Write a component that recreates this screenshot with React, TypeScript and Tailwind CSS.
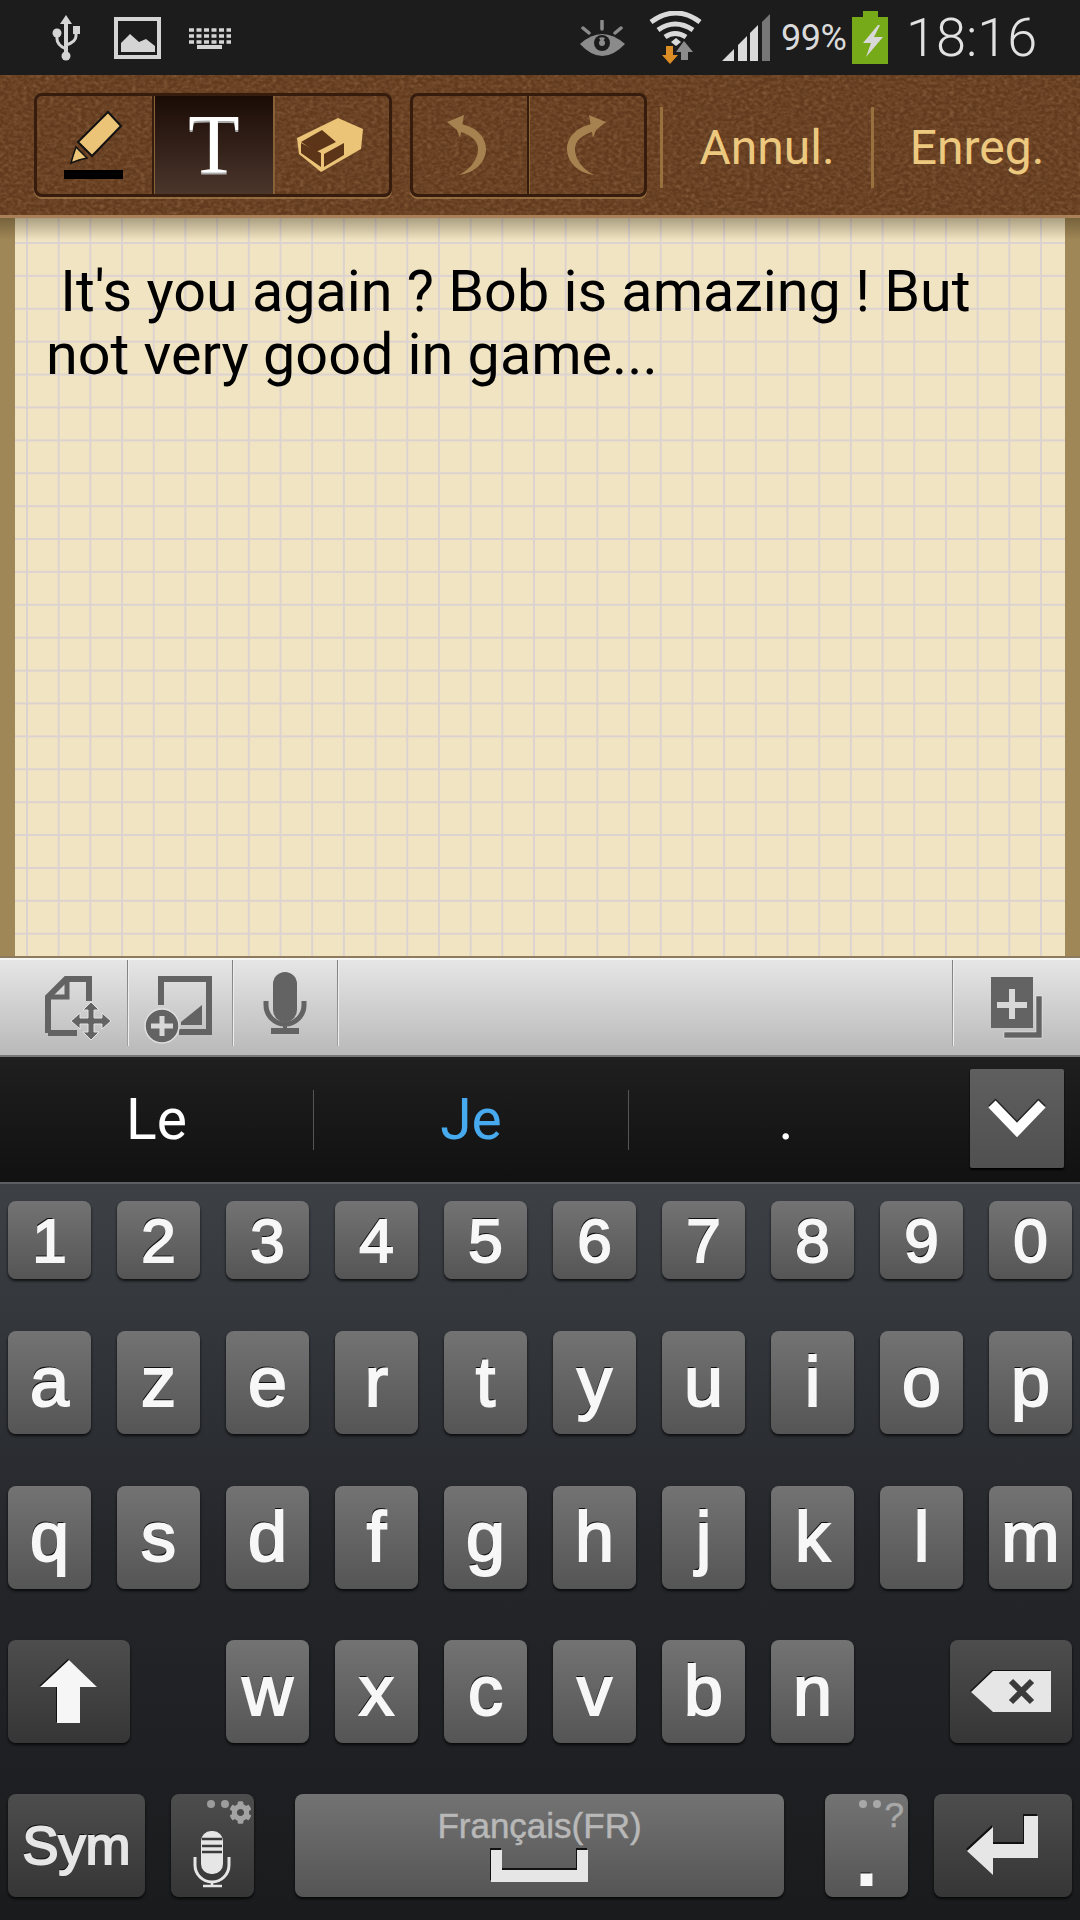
import { FaCog } from "react-icons/fa";

const digits = ["1", "2", "3", "4", "5", "6", "7", "8", "9", "0"];
const topLetters = ["a", "z", "e", "r", "t", "y", "u", "i", "o", "p"];
const midLetters = ["q", "s", "d", "f", "g", "h", "j", "k", "l", "m"];
const lowLetters = ["w", "x", "c", "v", "b", "n"];

const lightKey = "bg-gradient-to-b from-[#737373] to-[#555555] shadow-[0_2px_3px_rgba(0,0,0,0.75)]";
const darkKey = "bg-gradient-to-b from-[#4d4d4d] to-[#363636] shadow-[0_2px_3px_rgba(0,0,0,0.75)]";
const keyFace = "font-['Liberation_Sans'] text-[#f7f7f7] [text-shadow:-1px_-2px_0_#111] [-webkit-text-stroke:2px_#f7f7f7]";

function LetterKey({ label, small }: { label: string; small?: boolean }) {
  return (
    <div className={`w-[83px] h-full rounded-lg flex items-center justify-center ${lightKey} ${keyFace} ${small ? "text-[62px]" : "text-[70px]"}`}>
      {label}
    </div>
  );
}

function StatusBar() {
  return (
    <div className="h-[75px] bg-[#1c1c1c] flex items-center shrink-0">
      {/* usb */}
      <svg className="ml-[52px]" width="29" height="46" viewBox="52 14 29 46">
        <path d="M66 14l6 9h-4v28h-4V23h-4z" fill="#d4d4d4" />
        <circle cx="66" cy="55" r="4.5" fill="#d4d4d4" />
        <circle cx="57" cy="32" r="4.5" fill="#d4d4d4" />
        <rect x="73" y="25" width="7" height="8" fill="#d4d4d4" />
        <path d="M57 34v4q0 6 9 10M76 32v3q0 6-10 9" fill="none" stroke="#d4d4d4" strokeWidth="3" />
      </svg>
      {/* gallery */}
      <svg className="ml-[33px]" width="47" height="42" viewBox="114 16 47 42">
        <rect x="116" y="18" width="43" height="38" fill="none" stroke="#d4d4d4" strokeWidth="4" />
        <path d="M121 51V42l9-9 9 8 7-3 9 7v6z" fill="#d4d4d4" />
      </svg>
      {/* keyboard */}
      <svg className="ml-[27px]" width="43" height="22" viewBox="188 27 43 22">
        <path d="M189 30h42M189 36h42M189 42h42" stroke="#d4d4d4" strokeWidth="3.5" strokeDasharray="5 2.5" fill="none" />
        <rect x="197" y="45" width="25" height="4" fill="#d4d4d4" />
      </svg>

      {/* eye */}
      <svg className="ml-[349px]" width="45" height="36" viewBox="580 19 45 36">
        <path d="M580 43q22-20 45 0q-23 24-45 0z" fill="#8b8b8b" />
        <circle cx="602" cy="42" r="8" fill="#1c1c1c" />
        <path d="M602 42l-3-5a6 6 0 0 1 6 0z" fill="#8b8b8b" />
        <circle cx="602" cy="42" r="3" fill="#8b8b8b" />
        <path d="M602 20v8M583 27l6 5M621 27l-6 5" stroke="#8b8b8b" strokeWidth="3.5" strokeLinecap="round" />
      </svg>
      {/* wifi with traffic arrows */}
      <svg className="ml-[24px]" width="53" height="54" viewBox="649 10 53 54">
        <path d="M651 21q25-18 49 0" fill="none" stroke="#dadada" strokeWidth="5" />
        <path d="M658 29q17-12 35 0" fill="none" stroke="#dadada" strokeWidth="5" />
        <path d="M665 36q10-7 21 0" fill="none" stroke="#dadada" strokeWidth="5" />
        <path d="M671 41l5-4 5 4-5 4z" fill="#dadada" />
        <path d="M666 45h7v9h5l-8 9-8-9h4z" fill="#dd8d25" />
        <path d="M684 40l9 11h-5v8h-7v-8h-5z" fill="#8c8c8c" />
      </svg>
      {/* signal */}
      <svg className="ml-[20px]" width="48" height="47" viewBox="722 16 48 47">
        <path d="M722 63l12-12v12zM738 63V47l9-9v25zM750 63V35l8-8v36z" fill="#dadada" />
        <path d="M762 63V24l8-8v47z" fill="#777777" />
      </svg>
      <span className="ml-[11px] w-[64px] text-[36px] leading-none font-[Roboto] text-[#dadada] whitespace-nowrap tracking-[-0.5px]">99%</span>
      {/* battery */}
      <svg className="ml-[7px]" width="36" height="53" viewBox="852 11 36 53">
        <path d="M863 11h15v6h10v47h-36V17h11z" fill="#77aa18" />
        <path d="M878 25l-15 18h8l-5 14 17-20h-9l6-12z" fill="#d8d8d8" />
      </svg>
      <span className="ml-[18px] text-[54px] leading-none font-[Roboto] font-light text-[#e2e2e2]">18:16</span>
    </div>
  );
}

function ToolCell({ width, children, active }: { width: string; children: React.ReactNode; active?: boolean }) {
  return (
    <div className={`${width} h-full flex items-center justify-center ${active ? "bg-gradient-to-b from-[#1b0c07] to-[#4b362c]" : ""}`}>
      {children}
    </div>
  );
}

function UndoArrow({ flip }: { flip?: boolean }) {
  return (
    <svg className={flip ? "-scale-x-100" : ""} width="42" height="62" viewBox="0 0 42 62">
      <path d="M2 8L19 1l-4 23-3-8z" fill="#a5824f" />
      <path d="M12 9C30 12 41 22 41 35C41 48 30 59 14 61C26 55 33 45 33 35C33 27 26 20 12 17z" fill="#a5824f" />
    </svg>
  );
}

function Toolbar() {
  const groupFrame = "h-[104px] flex border-[3px] border-[#361c0d] rounded-[8px] shadow-[0_2px_0_rgba(176,136,84,0.6)] overflow-hidden";
  const divider = "w-[3px] h-full bg-[#361c0d] border-r border-[#8a6238]";
  return (
    <div className="relative h-[143px] shrink-0 bg-[#623a1e] border-b-[3px] border-[#a98057] flex items-start pt-[18px]">
      {/* leather grain */}
      <svg className="absolute inset-0 w-full h-full opacity-35">
        <filter id="hide">
          <feTurbulence type="fractalNoise" baseFrequency="0.22 0.3" numOctaves="2" seed="7" />
          <feColorMatrix values="0 0 0 0 0.55  0 0 0 0 0.33  0 0 0 0 0.15  1.4 1 0 0 -0.95" />
        </filter>
        <rect width="100%" height="100%" filter="url(#hide)" />
      </svg>

      <div className={`relative ml-[34px] w-[358px] ${groupFrame}`}>
        <ToolCell width="w-[115px]">
          {/* highlighter with current colour bar */}
          <svg className="mr-[2px]" width="66" height="74" viewBox="60 106 66 74">
            <path d="M107 110l13 14-29 30-14-14z" fill="#ecc478" stroke="#111" strokeWidth="2" />
            <path d="M75 145l11 11-8 2-8 3 2-7z" fill="#ecc478" stroke="#111" strokeWidth="1.5" />
            <rect x="63" y="168" width="59" height="9" fill="#000" />
          </svg>
        </ToolCell>
        <div className={divider} />
        <ToolCell width="w-[118px]" active>
          <span className="font-['Liberation_Serif'] text-[84px] leading-none text-white [text-shadow:0_2px_0_#aaa]">T</span>
        </ToolCell>
        <div className="w-[2px] h-full bg-[#8a6238]" />
        <ToolCell width="flex-1">
          {/* eraser */}
          <svg className="mr-[5px]" width="68" height="56" viewBox="295 116 68 56">
            <path d="M296 137l41-20 25 11-2 20-40 23-22-18z" fill="#ecc478" />
            <path d="M321 129l14 12-20 10-15-10z" fill="#5c3519" />
            <path d="M300 142l20 10v14l-20-14zM323 153l20-11v12l-20 12z" fill="#5c3519" />
          </svg>
        </ToolCell>
      </div>

      <div className={`relative ml-[18px] w-[237px] ${groupFrame}`}>
        <ToolCell width="w-[114px]">
          <UndoArrow />
          <div className="w-[8px]" />
        </ToolCell>
        <div className={divider} />
        <ToolCell width="flex-1">
          <UndoArrow flip />
        </ToolCell>
      </div>

      <div className="relative ml-[13px] mt-[14px] w-[3px] h-[81px] bg-[#99713f]" />
      <div className="relative w-[208px] h-[109px] flex items-center justify-center font-[Roboto] text-[48px] text-[#ecc97f]">Annul.</div>
      <div className="relative mt-[14px] w-[3px] h-[81px] bg-[#99713f]" />
      <div className="relative flex-1 h-[109px] flex items-center justify-center font-[Roboto] text-[48px] text-[#ecc97f]">Enreg.</div>
    </div>
  );
}

function Paper() {
  return (
    <div className="relative flex-1 flex border-b-2 border-[#8c7c5c]">
      <div className="w-[15px] bg-[#a08757]" />
      <div className="flex-1 bg-[#f1e4c2] bg-[linear-gradient(to_right,#dcd3d0_1.5px,transparent_1.5px),linear-gradient(to_bottom,#dcd3d0_1.5px,transparent_1.5px)] bg-size-[31.7px_32.9px] bg-position-[11px_24px]">
        <p className="pl-[31px] pr-[30px] pt-[42px] font-[Roboto] text-[57.5px] leading-[63px] text-black whitespace-pre-wrap">
          {" It's you again ? Bob is amazing ! But not very good in game..."}
        </p>
      </div>
      <div className="w-[15px] bg-[#a08757]" />
      <div className="absolute inset-x-0 top-0 h-[22px] bg-gradient-to-b from-[rgba(40,30,10,0.35)] to-transparent" />
    </div>
  );
}

function StripDivider() {
  return <div className="w-[2px] h-[86px] self-start bg-gradient-to-b from-[#7f7f7f] to-[#a0a0a0] border-r border-[#eeeeee]" />;
}

function EditStrip() {
  return (
    <div className="h-[99px] shrink-0 flex bg-gradient-to-b from-[#e6e6e6] to-[#b9b9b9] border-t-2 border-[#f6f6f6] border-b-2 border-b-[#777777]">
      {/* move page */}
      <svg width="127" height="96" viewBox="0 960 127 96">
        <path d="M48 1033V997l18-18h23v22M48 1033h29" fill="none" stroke="#636363" strokeWidth="6" />
        <path d="M48 997h19v-18" fill="none" stroke="#636363" strokeWidth="5" />
        <path d="M91 1002l8 8h-5v8h8v-5l9 8-9 8v-5h-8v8h5l-8 8-8-8h5v-8h-8v5l-9-8 9-8v5h8v-8h-5z" fill="#636363" stroke="#e4e4e4" strokeWidth="1" />
      </svg>
      <StripDivider />
      {/* add image */}
      <svg width="103" height="96" viewBox="129 960 103 96">
        <path d="M161 1005v-26h48v53h-30" fill="none" stroke="#636363" strokeWidth="6" />
        <path d="M181 1022l21-17v20h-21z" fill="#636363" />
        <circle cx="162" cy="1026" r="17" fill="#636363" stroke="#e0e0e0" strokeWidth="1.5" />
        <path d="M162 1016v20M151 1026h22" stroke="#d8d8d8" strokeWidth="5" />
      </svg>
      <StripDivider />
      {/* voice */}
      <svg width="103" height="96" viewBox="234 960 103 96">
        <rect x="273" y="972" width="24" height="50" rx="12" fill="#636363" />
        <path d="M266 1001v4a19 19 0 0 0 38 0v-4" fill="none" stroke="#636363" strokeWidth="5" />
        <path d="M285 1024v6" stroke="#636363" strokeWidth="4" />
        <rect x="271" y="1028" width="28" height="6" fill="#636363" />
      </svg>
      <StripDivider />
      <div className="flex-1" />
      <StripDivider />
      {/* add page */}
      <svg width="126" height="96" viewBox="954 960 126 96">
        <path d="M1036 996h6v42h-38v-6h32z" fill="#636363" stroke="#f0f0f0" strokeWidth="0.5" />
        <rect x="991" y="977" width="42" height="51" fill="#636363" />
        <path d="M1012 989v30M997 1005h30" stroke="#d8d8d8" strokeWidth="6" />
      </svg>
    </div>
  );
}

function Suggestions() {
  return (
    <div className="h-[125px] shrink-0 flex items-center bg-gradient-to-b from-[#1f1f1f] to-[#111111] font-[Roboto] text-[57px]">
      <div className="w-[313px] text-center text-white">Le</div>
      <div className="w-px h-[60px] bg-[#555555]" />
      <div className="w-[314px] text-center text-[#47a9ee]">Je</div>
      <div className="w-px h-[60px] bg-[#555555]" />
      <div className="w-[314px] text-center text-white">.</div>
      <div className="ml-[27px] w-[94px] h-[99px] mt-[-2px] rounded-[2px] bg-gradient-to-b from-[#5f5f5f] to-[#505050] shadow-[0_2px_2px_#000] flex items-center justify-center">
        <svg className="mb-[6px]" width="62" height="42" viewBox="-1 -1 62 42">
          <path d="M5 8l25 26 25-26" fill="none" stroke="#ffffff" strokeWidth="10" className="drop-shadow-[0_-2px_0_#222]" />
        </svg>
      </div>
    </div>
  );
}

function Keyboard() {
  const darkLabel = "font-['Liberation_Sans'] text-[#e6e6e6] [text-shadow:-1px_-2px_0_#111] [-webkit-text-stroke:2px_#e6e6e6]";
  return (
    <div className="h-[738px] shrink-0 flex flex-col px-2 pt-[17px] bg-gradient-to-b from-[#3d4146] via-[#24262a] to-[#1a1b1d] border-t-2 border-[#5b5f64]">
      <div className="h-[78px] flex justify-between">
        {digits.map((d) => (
          <LetterKey key={d} label={d} small />
        ))}
      </div>
      <div className="h-[103px] mt-[52px] flex justify-between">
        {topLetters.map((l) => (
          <LetterKey key={l} label={l} />
        ))}
      </div>
      <div className="h-[103px] mt-[52px] flex justify-between">
        {midLetters.map((l) => (
          <LetterKey key={l} label={l} />
        ))}
      </div>
      <div className="h-[103px] mt-[51px] flex">
        <div className={`w-[122px] h-full rounded-lg flex items-center justify-center ${darkKey}`}>
          <svg width="58" height="64" viewBox="41 1656 58 64" className="drop-shadow-[-1px_-1px_0_#111]">
            <path d="M70 1656l28 27H81v36H58v-36H41z" fill="#f6f6f6" />
          </svg>
        </div>
        <div className="ml-[96px] flex gap-[26px] h-full">
          {lowLetters.map((l) => (
            <LetterKey key={l} label={l} />
          ))}
        </div>
        <div className={`ml-[96px] w-[122px] h-full rounded-lg flex items-center justify-center ${darkKey}`}>
          <svg width="82" height="44" viewBox="971 1666 82 44" className="drop-shadow-[-1px_-1px_0_#111]">
            <path d="M994 1667h58v41h-58l-22-20z" fill="#e6e6e6" />
            <path d="M1012 1677l21 21M1033 1677l-21 21" stroke="#3a3a3a" strokeWidth="6" />
          </svg>
        </div>
      </div>
      <div className="h-[103px] mt-[51px] flex">
        <div className={`w-[137px] h-full rounded-lg flex items-center justify-center text-[54px] ${darkKey} ${darkLabel}`}>Sym</div>
        <div className={`relative ml-[26px] w-[83px] h-full rounded-lg ${darkKey}`}>
          <svg className="absolute left-0 top-0" width="83" height="103" viewBox="171 1793 83 103">
            <circle cx="211" cy="1803" r="4" fill="#9c9c9c" />
            <circle cx="225" cy="1803" r="4" fill="#9c9c9c" />
            <rect x="201" y="1830" width="22" height="43" rx="10" fill="#e6e6e6" />
            <path d="M202 1838h20M202 1845h20M202 1851h20" stroke="#3a3a3a" strokeWidth="2.5" />
            <path d="M195 1856v8a17 17 0 0 0 34 0v-8" fill="none" stroke="#e6e6e6" strokeWidth="3" />
            <path d="M212 1881v4M203 1885h19" stroke="#e6e6e6" strokeWidth="2.5" />
          </svg>
          <FaCog className="absolute right-[2px] top-[7px] text-[#a3a3a3]" size={23} />
        </div>
        <div className={`relative ml-[41px] w-[489px] h-full rounded-lg ${lightKey}`}>
          <div className="text-center pt-[12px] font-['Liberation_Sans'] text-[35px] leading-[40px] text-[#b8b8b8] [-webkit-text-stroke:0.5px_#b8b8b8]">Français(FR)</div>
          <svg className="absolute left-[196px] top-[56px] drop-shadow-[-1px_-2px_0_#111]" width="97" height="32" viewBox="0 0 97 32">
            <path d="M0 0h11v20h75V0h11v32H0z" fill="#e6e6e6" />
          </svg>
        </div>
        <div className={`relative ml-[41px] w-[83px] h-full rounded-lg flex items-center justify-center ${lightKey}`}>
          <span className={`mt-[30px] text-[70px] leading-none font-bold ${keyFace}`}>.</span>
          <span className="absolute right-[4px] top-[1px] font-['Liberation_Sans'] text-[35px] leading-[40px] text-[#a8a8a8] [-webkit-text-stroke:0.5px_#a8a8a8]">?</span>
          <svg className="absolute left-[34px] top-[6px]" width="24" height="8" viewBox="0 0 24 8">
            <circle cx="4" cy="4" r="4" fill="#a8a8a8" />
            <circle cx="18" cy="4" r="4" fill="#a8a8a8" />
          </svg>
        </div>
        <div className={`ml-[26px] w-[138px] h-full rounded-lg flex items-center justify-center ${darkKey}`}>
          <svg width="72" height="60" viewBox="967 1812 72 60" className="drop-shadow-[-1px_-2px_0_#111]">
            <path d="M1024 1812h14v42h-45v17l-26-24 26-24v17h31z" fill="#e6e6e6" />
          </svg>
        </div>
      </div>
    </div>
  );
}

export default function App() {
  return (
    <div className="w-[1080px] h-[1920px] flex flex-col overflow-hidden bg-black">
      <StatusBar />
      <Toolbar />
      <Paper />
      <EditStrip />
      <Suggestions />
      <Keyboard />
    </div>
  );
}
